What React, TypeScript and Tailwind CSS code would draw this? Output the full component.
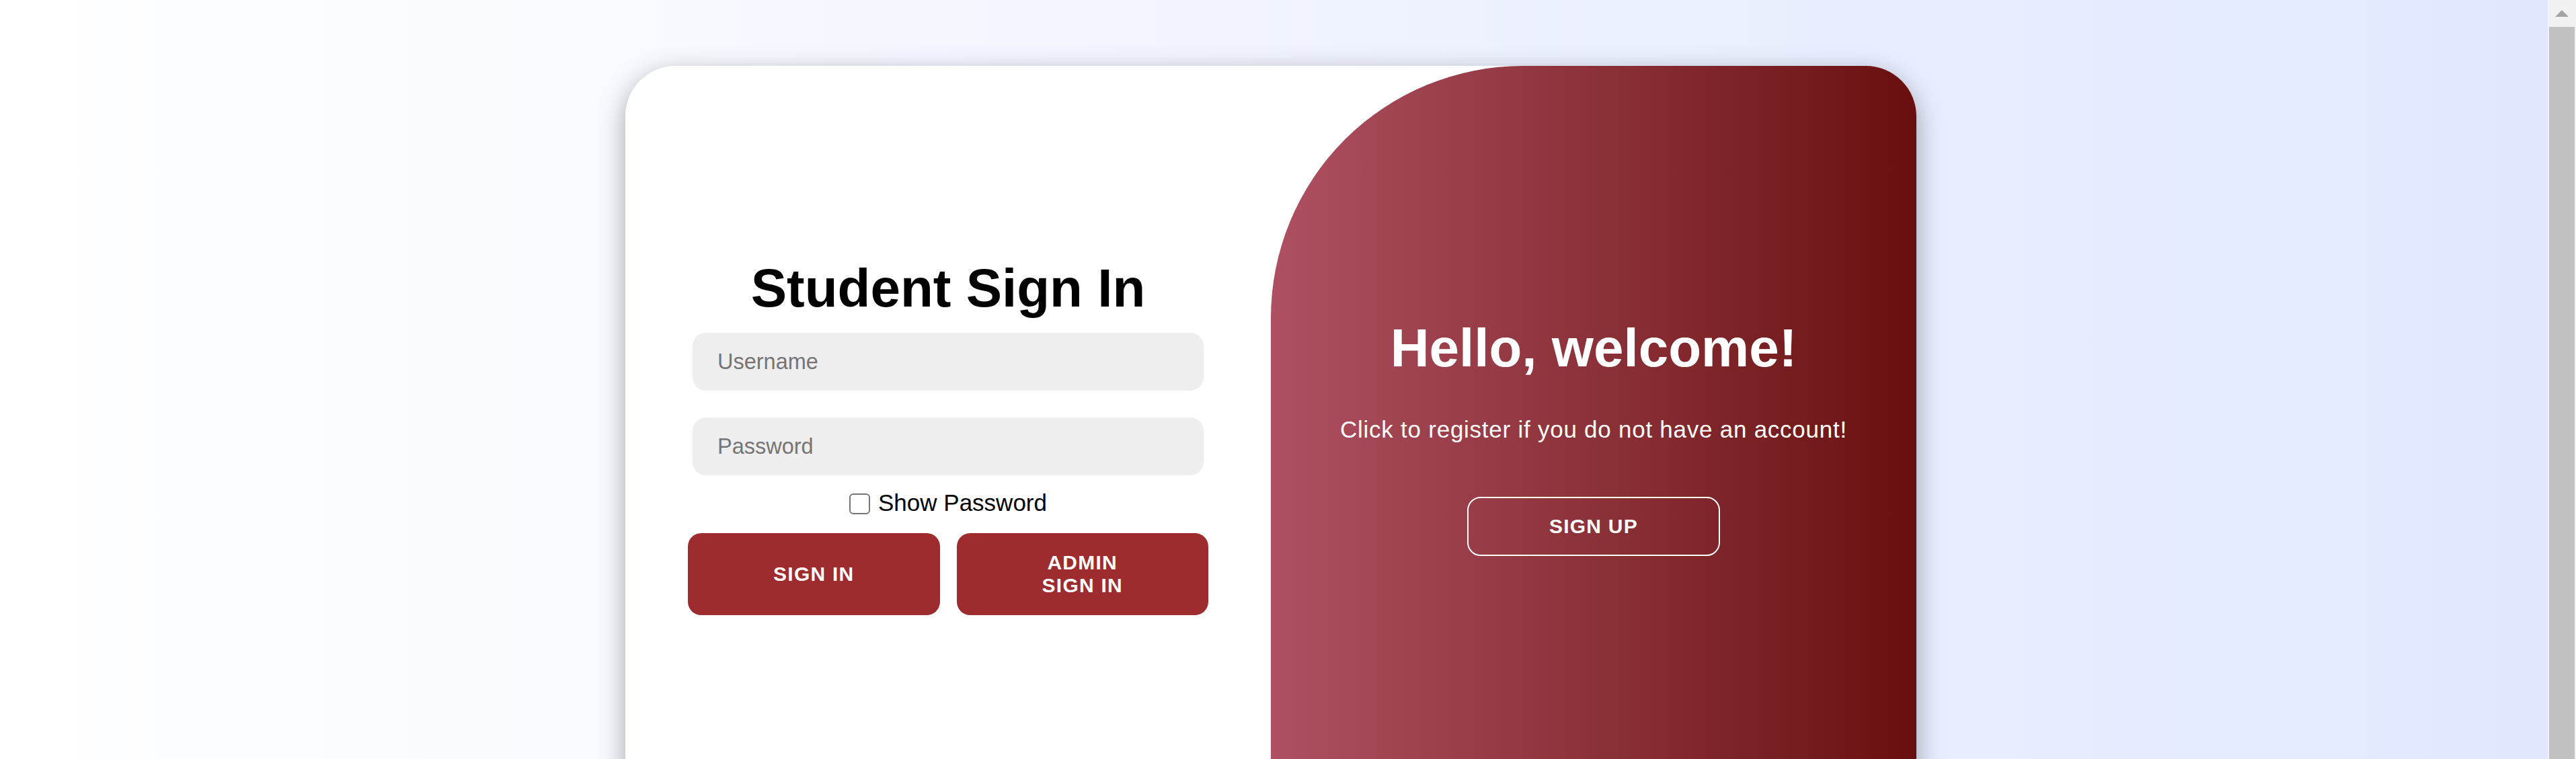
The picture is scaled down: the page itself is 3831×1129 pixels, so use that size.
import React from 'react'

function SignInForm() {
  return (
    <div className="w-1/2 h-full bg-white flex flex-col items-center justify-center px-[100px]">
      <h1 className="text-[80px] leading-[92px] font-bold text-black">Student Sign In</h1>

      <input
        type="text"
        placeholder="Username"
        className="w-full my-[20px] bg-[#eeeeee] rounded-[20px] px-[37px] py-[25px] text-[32.5px] leading-[36px] text-black placeholder:text-[#757575] outline-none"
      />
      <input
        type="password"
        placeholder="Password"
        className="w-full my-[20px] bg-[#eeeeee] rounded-[20px] px-[37px] py-[25px] text-[32.5px] leading-[36px] text-black placeholder:text-[#757575] outline-none"
      />

      <label className="flex items-center h-[41px] text-[35px] leading-[40px] text-black">
        <input
          type="checkbox"
          className="appearance-none w-[31px] h-[31px] mr-[12px] mt-[4px] border-[2.5px] border-[#767676] rounded-[6px] bg-white"
        />
        Show Password
      </label>

      <div className="flex gap-[25px] w-[774px] mt-[25px] shrink-0">
        <button className="flex-1 bg-[#9e2c2f] text-white text-[30px] leading-[34px] font-bold tracking-[1.25px] uppercase rounded-[20px] px-[112px] py-[25px] border-[2.5px] border-transparent">
          Sign In
        </button>
        <button className="flex-1 bg-[#9e2c2f] text-white text-[30px] leading-[34px] font-bold tracking-[1.25px] uppercase rounded-[20px] px-[112px] py-[25px] border-[2.5px] border-transparent">
          Admin Sign In
        </button>
      </div>
    </div>
  )
}

function WelcomePanel() {
  return (
    <div className="w-1/2 h-full rounded-tl-[375px] rounded-bl-[60px] bg-linear-to-r from-[#af5062] to-[#690e0e] text-white flex flex-col items-center justify-center px-[75px] text-center">
      <h1 className="text-[80px] leading-[92px] font-bold">Hello, welcome!</h1>
      <p className="text-[35px] leading-[50px] tracking-[0.75px] my-[50px]">
        Click to register if you do not have an account!
      </p>
      <button className="mt-[25px] w-[376px] bg-transparent border-[2.5px] border-white text-white text-[30px] leading-[34px] font-bold tracking-[1.25px] uppercase rounded-[20px] py-[25px]">
        Sign Up
      </button>
    </div>
  )
}

export default function App() {
  return (
    <div className="flex h-[1129px] w-full overflow-hidden font-['Liberation_Sans',Arial,sans-serif]">
      <main className="flex-1 bg-linear-to-r from-[#ffffff] to-[#e1e8fe] flex justify-center pt-[98px] pr-[9px]">
        <div className="flex w-[1920px] h-[1102px] shrink-0 bg-white rounded-[75px] overflow-hidden shadow-[0_12px_38px_rgba(0,0,0,0.35)]">
          <SignInForm />
          <WelcomePanel />
        </div>
      </main>

      {/* browser scrollbar */}
      <div className="w-[42px] h-full bg-[#f1f1f1] flex flex-col items-center">
        <div className="h-[40px] w-full flex items-center justify-center shrink-0">
          <div className="w-0 h-0 border-l-[10px] border-r-[10px] border-b-[10px] border-l-transparent border-r-transparent border-b-[#a3a3a3]" />
        </div>
        <div className="w-[38px] flex-1 bg-[#c1c1c1]" />
      </div>
    </div>
  )
}
